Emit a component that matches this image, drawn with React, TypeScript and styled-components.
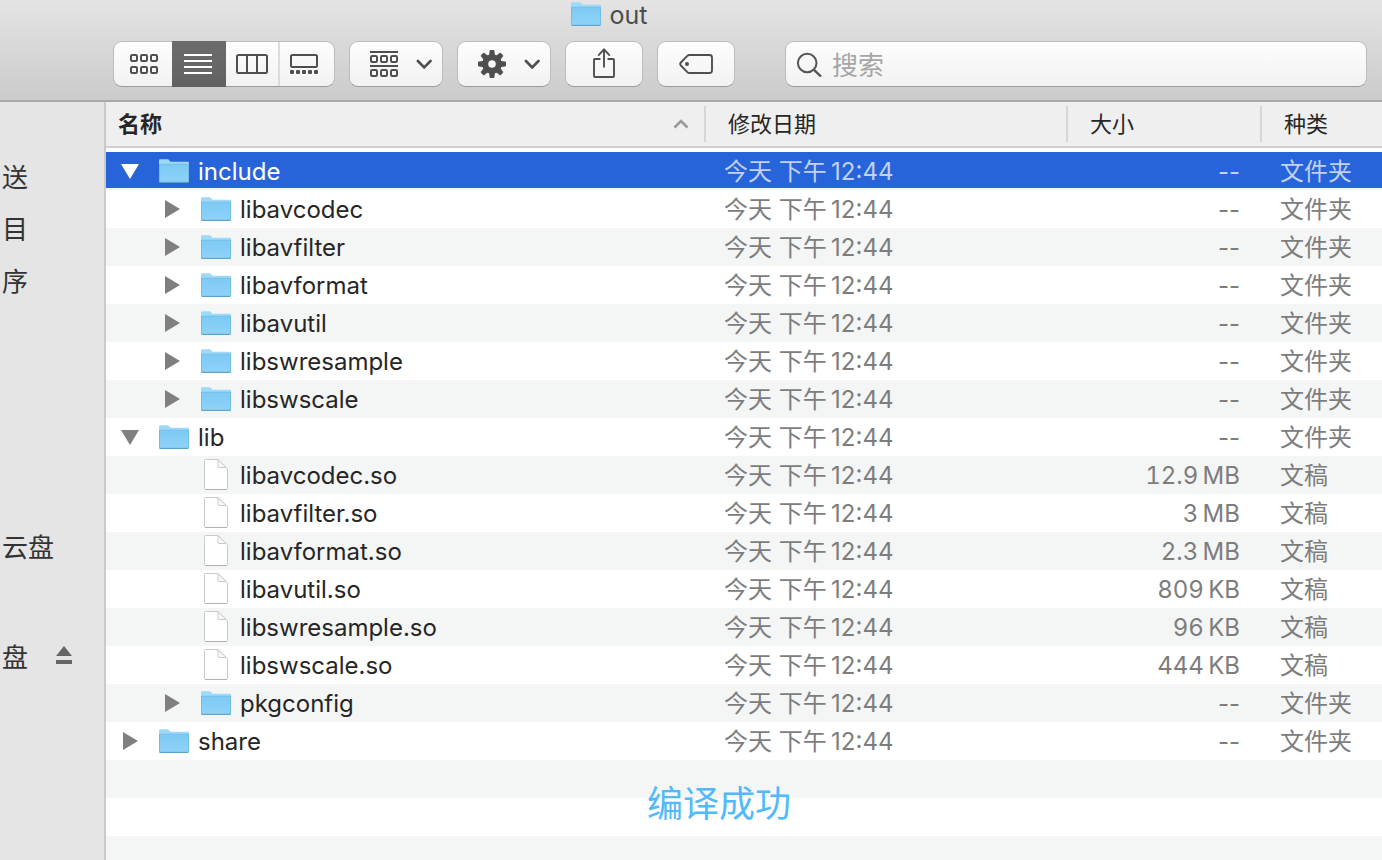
import React from "react";
import styled, { createGlobalStyle, css } from "styled-components";

const GlobalStyle = createGlobalStyle`
  * { box-sizing: border-box; }
  body {
    margin: 0;
    font-family: Inter, "Noto Sans CJK SC", sans-serif;
    color: #262626;
    background: #fff;
  }
  button { font: inherit; color: inherit; padding: 0; border: 0; background: none; }
  svg { display: block; flex: none; }
`;

const Window = styled.div`
  display: flex;
  flex-direction: column;
  min-height: 100vh;
`;

const TitleBar = styled.header`
  background: linear-gradient(#e4e4e4, #cbcbcb);
  border-bottom: 2px solid #a9a9a9;
  padding-bottom: 13px;
`;

const Title = styled.h1`
  margin: 0 0 13px;
  height: 28px;
  padding-right: 164px;
  display: flex;
  align-items: center;
  justify-content: center;
  gap: 9px;
  font-size: 25px;
  font-weight: 400;
  color: #4c4c4c;
`;

const TitleText = styled.span`
  padding-top: 2px;
`;

const Toolbar = styled.div`
  display: flex;
  gap: 14px;
  padding: 0 15px 0 113px;
`;

const controlFace = css`
  height: 46px;
  border: 1px solid #bdbdbd;
  border-bottom-color: #9c9c9c;
  border-radius: 9px;
  background: linear-gradient(#fdfdfd, #f2f2f2);
  color: #4f4f4f;
`;

const Segmented = styled.div`
  ${controlFace}
  display: grid;
  grid-template-columns: 58px 54px 52px 56px;
`;

const Segment = styled.button<{ $active?: boolean; $divided?: boolean }>`
  display: flex;
  align-items: center;
  justify-content: center;
  ${(p) => p.$divided && "border-left: 2px solid #dcdcdc; padding-right: 6px;"}
  ${(p) =>
    p.$active &&
    css`
      margin: -1px 0;
      padding-right: 2px;
      background: linear-gradient(#6c6c6c, #626262);
      color: #fff;
    `}
  &:first-child { padding-left: 2px; }
`;

const ToolButton = styled.button<{ $menu?: boolean }>`
  && {
    ${controlFace}
    width: ${(p) => (p.$menu ? 94 : 78)}px;
    display: flex;
    align-items: center;
    justify-content: center;
    gap: 18px;
    padding-left: ${(p) => (p.$menu ? 9 : 0)}px;
  }
`;

const SearchField = styled.label`
  ${controlFace}
  flex: 1;
  min-width: 0;
  margin-left: 36px;
  padding: 0 10px;
  display: flex;
  align-items: center;
  gap: 10px;
`;

const SearchInput = styled.input`
  flex: 1;
  min-width: 0;
  border: 0;
  padding: 3px 0 0;
  outline: 0;
  background: none;
  font: inherit;
  font-size: 26px;
  line-height: 40px;
  &::placeholder { color: #a6a6a6; opacity: 1; }
`;

const Body = styled.div`
  flex: 1;
  display: flex;
`;

const Sidebar = styled.nav`
  flex: none;
  width: 106px;
  padding-top: 47px;
  background: #e5e5e5;
  border-right: 2px solid #cacaca;
`;

const SidebarGroup = styled.ul<{ $space?: number }>`
  list-style: none;
  margin: ${(p) => p.$space || 0}px 0 0;
  padding: 0;
`;

const SidebarItem = styled.li`
  height: 52px;
  padding: 0 32px 0 2px;
  display: flex;
  align-items: center;
  justify-content: space-between;
  font-size: 26px;
  color: #333;
  white-space: nowrap;
`;

const Content = styled.main`
  flex: 1;
  min-width: 0;
  display: flex;
  flex-direction: column;
`;

const FileTable = styled.table`
  width: 100%;
  table-layout: fixed;
  border-collapse: separate;
  border-spacing: 0;
  font-size: 24px;
  white-space: nowrap;
  thead::after { content: ""; display: block; height: 4px; }
`;

const Heading = styled.th<{ $width?: number }>`
  ${(p) => p.$width && `width: ${p.$width}px;`}
  height: 46px;
  padding: 4px 0;
  background: #efefef;
  border-bottom: 2px solid #cfcfcf;
`;

const HeadingButton = styled.button<{ $primary?: boolean }>`
  && {
    width: 100%;
    height: 36px;
    display: flex;
    align-items: center;
    justify-content: space-between;
    padding: 0 ${(p) => (p.$primary ? 15 : 22)}px 4px ${(p) => (p.$primary ? 12 : 22)}px;
    border-right: 2px solid #d6d6d6;
    font-size: 22px;
    font-weight: ${(p) => (p.$primary ? 600 : 400)};
  }
  th:last-child > && { border-right: 0; }
`;

const SortMark = styled.span`
  padding-top: 4px;
`;

const Cell = styled.td`
  height: 38px;
  padding: 2px 22px 0 18px;
  line-height: 36px;
  color: #7d7d7d;
  &:last-child { padding-right: 0; }
`;

const SizeCell = styled(Cell)<{ $numeric: boolean }>`
  text-align: right;
  font-variant-numeric: ${(p) => (p.$numeric ? "tabular-nums" : "normal")};
`;

const NameCell = styled(Cell)<{ $level: number }>`
  padding-top: 0;
  padding-left: ${(p) => 14 + p.$level * 42}px;
  color: #262626;
`;

const Row = styled.tr<{ $selected?: boolean }>`
  &:nth-child(odd) { background: #f4f5f5; }
  ${(p) =>
    p.$selected &&
    css`
      & > td {
        background: linear-gradient(#2864d9 0 36px, #f4f5f5 36px);
        color: #c2d1f5;
      }
      & > td:first-child { color: #fff; }
    `}
`;

const Entry = styled.div`
  display: flex;
  align-items: center;
`;

const FileName = styled.span`
  padding-top: 2px;
`;

const Disclosure = styled.button`
  width: 20px;
  height: 20px;
  display: flex;
  align-items: center;
  justify-content: center;
`;

const Blank = styled.span`
  width: 20px;
`;

const IconSlot = styled.span`
  width: 32px;
  margin: 0 8px 0 18px;
  display: flex;
  justify-content: center;
`;

const EmptyRows = styled.div`
  flex: 1;
  padding: 15px 50px 0 0;
  background: repeating-linear-gradient(#f4f5f5 0 38px, #fff 38px 76px);
`;

const Caption = styled.p`
  margin: 0;
  text-align: center;
  font-family: "Noto Sans CJK SC", sans-serif;
  font-size: 36px;
  font-weight: 400;
  line-height: 52px;
  color: #50bafa;
`;

const Folder = () => (
  <svg width="30" height="24" viewBox="0 0 30 24">
    <defs>
      <linearGradient id="folderFace" x1="0" y1="0" x2="0" y2="1">
        <stop offset="0" stopColor="#7ccaf5" />
        <stop offset="1" stopColor="#8fd2f8" />
      </linearGradient>
    </defs>
    <path d="M0 23V1.5Q0 .3 1.2.3H8.6Q9.6.3 10.4 1.4L11.4 2.8H28.8Q30 2.8 30 4V23Z" fill="#9fd9f9" />
    <path d="M0 5H30V22.5Q30 23.5 29 23.5H1Q0 23.5 0 22.5Z" fill="url(#folderFace)" />
    <path d="M0 5.2H30" stroke="#74bee9" strokeWidth=".8" />
    <path d="M.4 5V22.6Q.4 23.4 1.2 23.4H28.8Q29.6 23.4 29.6 22.6V5" fill="none" stroke="#6db6df" strokeWidth=".8" />
    <path d="M.6 23.4H29.4" stroke="#5a9fc6" />
  </svg>
);

const Document = () => (
  <svg width="24" height="32" viewBox="0 0 24 32">
    <path d="M1.5 .5H14L23.5 10V29.5Q23.5 30.5 22.5 30.5H1.5Q.5 30.5 .5 29.5V1.5Q.5 .5 1.5 .5Z" fill="#fff" stroke="#cacaca" />
    <path d="M14 .7V7.5Q14 8.5 15 8.5H22.2Z" fill="#f8f8f8" stroke="#cacaca" strokeLinejoin="round" />
    <path d="M1 30.5H23" stroke="#b0b0b0" />
  </svg>
);

const Triangle = ({ open }: { open: boolean }) =>
  open ? (
    <svg width="18" height="15" viewBox="0 0 18 15">
      <path d="M0 0H18L9 15Z" fill="currentColor" />
    </svg>
  ) : (
    <svg width="15" height="18" viewBox="0 0 15 18">
      <path d="M0 0V18L15 9Z" fill="currentColor" />
    </svg>
  );

const Squares = ({ y }: { y: number }) => (
  <>
    {[1, 11, 21].map((x) => (
      <rect key={x} x={x} y={y} width="6" height="6" rx="1.2" fill="none" stroke="currentColor" strokeWidth="2" />
    ))}
  </>
);

const GridIcon = () => (
  <svg width="28" height="20" viewBox="0 0 28 20">
    <Squares y={1} />
    <Squares y={13} />
  </svg>
);

const ListIcon = () => (
  <svg width="28" height="20" viewBox="0 0 28 20">
    <path d="M0 1H28M0 7H28M0 13H28M0 19H28" stroke="currentColor" strokeWidth="2" />
  </svg>
);

const ColumnsIcon = () => (
  <svg width="32" height="20" viewBox="0 0 32 20" fill="none" stroke="currentColor">
    <rect x="1" y="1" width="30" height="18" rx="1.5" strokeWidth="2" />
    <path d="M11 1V19M21 1V19" strokeWidth="2" />
  </svg>
);

const GalleryIcon = () => (
  <svg width="28" height="20" viewBox="0 0 28 20">
    <rect x="1" y="1" width="26" height="12" rx="1.5" fill="none" stroke="currentColor" strokeWidth="2" />
    {[0, 6, 12, 18, 24].map((x) => (
      <rect key={x} x={x} y="16" width="4" height="4" rx="1" fill="currentColor" />
    ))}
  </svg>
);

const GroupIcon = () => (
  <svg width="28" height="26" viewBox="0 0 28 26">
    <path d="M0 1H28M0 15H28" stroke="currentColor" strokeWidth="2" />
    <Squares y={5} />
    <Squares y={19} />
  </svg>
);

const GearIcon = () => (
  <svg width="28" height="28" viewBox="-14 -14 28 28">
    {[0, 45, 90, 135, 180, 225, 270, 315].map((a) => (
      <path key={a} d="M-3.2 -7L-2.4 -13.2Q-2.3 -14 -1.5 -14H1.5Q2.3 -14 2.4 -13.2L3.2 -7Z" fill="currentColor" transform={`rotate(${a})`} />
    ))}
    <circle r="6.8" fill="none" stroke="currentColor" strokeWidth="6" />
  </svg>
);

const ChevronIcon = () => (
  <svg width="16" height="10" viewBox="0 0 16 10">
    <path d="M1.9 2L8.2 8.4L14.5 2" fill="none" stroke="currentColor" strokeWidth="2.6" strokeLinecap="round" />
  </svg>
);

const ShareIcon = () => (
  <svg width="22" height="32" viewBox="0 2 22 32" fill="none" stroke="currentColor" strokeWidth="1.9">
    <path d="M7.5 13H2Q1 13 1 14V30Q1 31 2 31H20Q21 31 21 30V14Q21 13 20 13H14.5" />
    <path d="M11 21.5V3.5M5.2 9.6L11 3.4L16.8 9.6" />
  </svg>
);

const TagIcon = () => (
  <svg width="34" height="20" viewBox="0 0 34 20">
    <path
      d="M10.5 1H30.5Q33 1 33 3.5V16.5Q33 19 30.5 19H10.5Q9.2 19 8.3 18.1L1.9 11.5Q.5 10 1.9 8.5L8.3 1.9Q9.2 1 10.5 1Z"
      fill="none"
      stroke="currentColor"
      strokeWidth="1.9"
    />
    <circle cx="8" cy="10" r="2" fill="currentColor" />
  </svg>
);

const SearchIcon = () => (
  <svg width="26" height="26" viewBox="0 0 26 26" fill="none" stroke="#555" strokeWidth="2">
    <circle cx="11.2" cy="12" r="9.3" />
    <path d="M17.8 18.6L25 25.6" strokeWidth="2.3" />
  </svg>
);

const SortIcon = () => (
  <svg width="16" height="10" viewBox="0 0 16 10">
    <path d="M1.5 8.5L8 2L14.5 8.5" fill="none" stroke="#999" strokeWidth="2.6" />
  </svg>
);

const EjectIcon = () => (
  <svg width="16" height="18" viewBox="0 0 16 18">
    <path d="M8 0L16 10H0ZM0 14H16V18H0Z" fill="#666" />
  </svg>
);

type FileEntry = { name: string; level: number; open?: boolean; size?: string; selected?: boolean };

const files: FileEntry[] = [
  { name: "include", level: 0, open: true, selected: true },
  { name: "libavcodec", level: 1 },
  { name: "libavfilter", level: 1 },
  { name: "libavformat", level: 1 },
  { name: "libavutil", level: 1 },
  { name: "libswresample", level: 1 },
  { name: "libswscale", level: 1 },
  { name: "lib", level: 0, open: true },
  { name: "libavcodec.so", level: 1, size: "12.9\u2009MB" },
  { name: "libavfilter.so", level: 1, size: "3\u2009MB" },
  { name: "libavformat.so", level: 1, size: "2.3\u2009MB" },
  { name: "libavutil.so", level: 1, size: "809\u2009KB" },
  { name: "libswresample.so", level: 1, size: "96\u2009KB" },
  { name: "libswscale.so", level: 1, size: "444\u2009KB" },
  { name: "pkgconfig", level: 1 },
  { name: "share", level: 0 },
];

const FileRow = ({ file }: { file: FileEntry }) => (
  <Row $selected={file.selected} aria-selected={!!file.selected}>
    <NameCell $level={file.level}>
      <Entry>
        {file.size ? (
          <Blank />
        ) : (
          <Disclosure aria-label={file.name} aria-expanded={!!file.open} style={{ color: file.selected ? "#fff" : "#7f7f7f" }}>
            <Triangle open={!!file.open} />
          </Disclosure>
        )}
        <IconSlot>{file.size ? <Document /> : <Folder />}</IconSlot>
        <FileName>{file.name}</FileName>
      </Entry>
    </NameCell>
    <Cell>{"今天 下午\u200912:44"}</Cell>
    <SizeCell $numeric={!!file.size}>{file.size || "--"}</SizeCell>
    <Cell>{file.size ? "文稿" : "文件夹"}</Cell>
  </Row>
);

export default function App() {
  return (
    <Window>
      <GlobalStyle />
      <TitleBar>
        <Title>
          <Folder />
          <TitleText>out</TitleText>
        </Title>
        <Toolbar>
          <Segmented role="group" aria-label="显示">
            <Segment aria-label="图标"><GridIcon /></Segment>
            <Segment aria-label="列表" aria-pressed="true" $active><ListIcon /></Segment>
            <Segment aria-label="分栏"><ColumnsIcon /></Segment>
            <Segment aria-label="画廊" $divided><GalleryIcon /></Segment>
          </Segmented>
          <ToolButton $menu aria-label="分组"><GroupIcon /><ChevronIcon /></ToolButton>
          <ToolButton $menu aria-label="操作"><GearIcon /><ChevronIcon /></ToolButton>
          <ToolButton aria-label="共享"><ShareIcon /></ToolButton>
          <ToolButton aria-label="标签"><TagIcon /></ToolButton>
          <SearchField>
            <SearchIcon />
            <SearchInput type="search" placeholder="搜索" aria-label="搜索" />
          </SearchField>
        </Toolbar>
      </TitleBar>
      <Body>
        <Sidebar>
          <SidebarGroup>
            <SidebarItem>送</SidebarItem>
            <SidebarItem>目</SidebarItem>
            <SidebarItem>序</SidebarItem>
          </SidebarGroup>
          <SidebarGroup $space={214}>
            <SidebarItem>云盘</SidebarItem>
          </SidebarGroup>
          <SidebarGroup $space={58}>
            <SidebarItem>
              盘
              <button aria-label="推出"><EjectIcon /></button>
            </SidebarItem>
          </SidebarGroup>
        </Sidebar>
        <Content>
          <FileTable>
            <thead>
              <tr>
                <Heading aria-sort="ascending">
                  <HeadingButton $primary>
                    名称
                    <SortMark><SortIcon /></SortMark>
                  </HeadingButton>
                </Heading>
                <Heading $width={362}><HeadingButton>修改日期</HeadingButton></Heading>
                <Heading $width={194}><HeadingButton>大小</HeadingButton></Heading>
                <Heading $width={120}><HeadingButton>种类</HeadingButton></Heading>
              </tr>
            </thead>
            <tbody>
              {files.map((f) => (
                <FileRow key={f.name} file={f} />
              ))}
            </tbody>
          </FileTable>
          <EmptyRows>
            <Caption>编译成功</Caption>
          </EmptyRows>
        </Content>
      </Body>
    </Window>
  );
}
